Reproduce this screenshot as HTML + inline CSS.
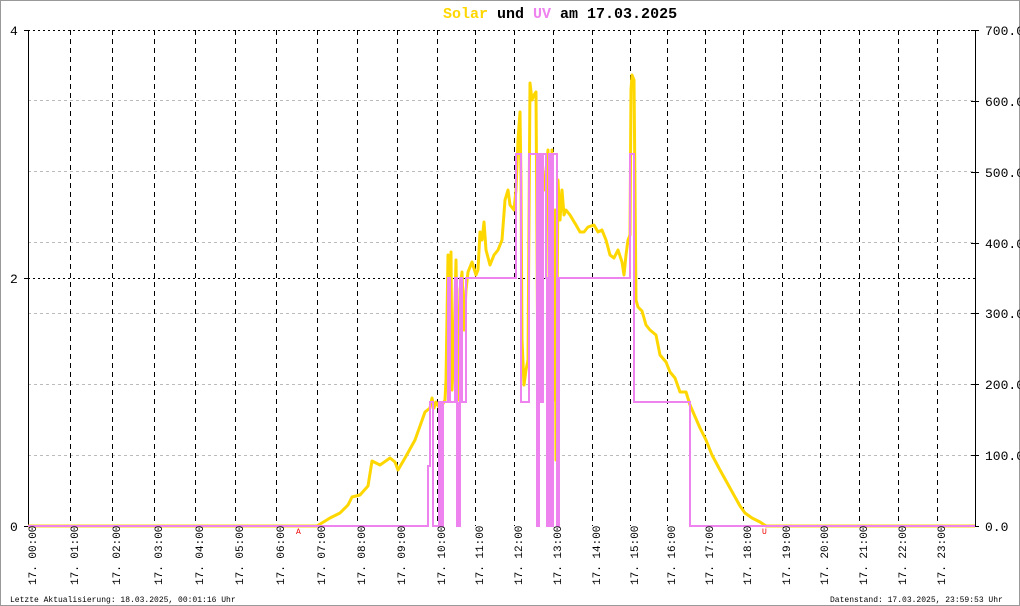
<!DOCTYPE html>
<html><head><meta charset="utf-8"><style>
html,body{margin:0;padding:0;background:#fff;}
body{width:1020px;height:606px;overflow:hidden;}
svg{display:block;}
text{font-family:"Liberation Mono","DejaVu Sans Mono",monospace;}
</style></head><body>
<svg width="1020" height="606" viewBox="0 0 1020 606" xmlns="http://www.w3.org/2000/svg">
<rect x="0.5" y="0.5" width="1019" height="605" fill="#fff" stroke="#999"/>
<text x="443" y="18" font-size="15" font-weight="bold" fill="#000"><tspan fill="#ffd700">Solar</tspan> und <tspan fill="#ee82ee">UV</tspan> am 17.03.2025</text>
<g stroke="#bbb" stroke-dasharray="3,3" stroke-width="1">
<line x1="28" y1="100.5" x2="975" y2="100.5"/>
<line x1="28" y1="171.5" x2="975" y2="171.5"/>
<line x1="28" y1="242.5" x2="975" y2="242.5"/>
<line x1="28" y1="313.5" x2="975" y2="313.5"/>
<line x1="28" y1="384.5" x2="975" y2="384.5"/>
<line x1="28" y1="455.5" x2="975" y2="455.5"/>
</g>
<g stroke="#000" stroke-dasharray="2,3" stroke-width="1">
<line x1="28" y1="30.5" x2="975" y2="30.5"/>
<line x1="28" y1="278.5" x2="975" y2="278.5"/>
</g>
<g stroke="#000" stroke-dasharray="5,4" stroke-width="1">
<line x1="70.5" y1="30" x2="70.5" y2="526"/><line x1="112.5" y1="30" x2="112.5" y2="526"/>
<line x1="154.5" y1="30" x2="154.5" y2="526"/><line x1="195.5" y1="30" x2="195.5" y2="526"/>
<line x1="235.5" y1="30" x2="235.5" y2="526"/><line x1="276.5" y1="30" x2="276.5" y2="526"/>
<line x1="317.5" y1="30" x2="317.5" y2="526"/><line x1="357.5" y1="30" x2="357.5" y2="526"/>
<line x1="397.5" y1="30" x2="397.5" y2="526"/><line x1="437.5" y1="30" x2="437.5" y2="526"/>
<line x1="475.5" y1="30" x2="475.5" y2="526"/><line x1="514.5" y1="30" x2="514.5" y2="526"/>
<line x1="553.5" y1="30" x2="553.5" y2="526"/><line x1="592.5" y1="30" x2="592.5" y2="526"/>
<line x1="630.5" y1="30" x2="630.5" y2="526"/><line x1="667.5" y1="30" x2="667.5" y2="526"/>
<line x1="705.5" y1="30" x2="705.5" y2="526"/><line x1="743.5" y1="30" x2="743.5" y2="526"/>
<line x1="782.5" y1="30" x2="782.5" y2="526"/><line x1="820.5" y1="30" x2="820.5" y2="526"/>
<line x1="859.5" y1="30" x2="859.5" y2="526"/><line x1="898.5" y1="30" x2="898.5" y2="526"/>
<line x1="937.5" y1="30" x2="937.5" y2="526"/>
</g>
<g stroke="#000" stroke-width="1">
<line x1="28.5" y1="30" x2="28.5" y2="527"/>
<line x1="975.5" y1="30" x2="975.5" y2="527"/>
<line x1="24" y1="30.5" x2="28" y2="30.5"/><line x1="24" y1="278.5" x2="28" y2="278.5"/><line x1="24" y1="526.5" x2="28" y2="526.5"/>
<line x1="971" y1="30.5" x2="979" y2="30.5"/><line x1="971" y1="101.5" x2="979" y2="101.5"/><line x1="971" y1="172.5" x2="979" y2="172.5"/>
<line x1="971" y1="243.5" x2="979" y2="243.5"/><line x1="971" y1="313.5" x2="979" y2="313.5"/><line x1="971" y1="384.5" x2="979" y2="384.5"/>
<line x1="971" y1="455.5" x2="979" y2="455.5"/><line x1="971" y1="526.5" x2="979" y2="526.5"/>
</g>
<g font-size="13" fill="#000">
<text x="10" y="35">4</text><text x="10" y="283">2</text><text x="10" y="531">0</text>
<text x="985" y="35">700.0</text><text x="985" y="106">600.0</text><text x="985" y="177">500.0</text>
<text x="985" y="248">400.0</text><text x="985" y="318">300.0</text><text x="985" y="389">200.0</text>
<text x="985" y="460">100.0</text><text x="985" y="531">0.0</text>
</g>
<polyline fill="none" stroke="#ffd700" stroke-width="3" stroke-linejoin="round" points="28,526 317,526 330,518 340,513 348,505 352,497 360,495 368,486 372,461 380,465 390,458 395,462 398,470 405,458 415,440 425,412 430,408 432,398 434,408 436,402 440,409 445,400 446,380 448,255 449,370 451,252 452,390 454,345 456,260 458,400 460,290 462,272 464,330 466,290 468,272 472,262 476,275 478,270 480,232 482,240 484,222 486,250 490,265 494,255 498,250 502,240 505,200 508,190 510,205 514,210 516,190 518,140 520,112 521,180 522,340 524,385 526,370 528,360 530,83 532,100 534,95 536,92 538,400 539,160 540,180 542,170 544,190 546,170 548,150 550,400 552,150 553,400 555,210 556,460 558,180 560,220 562,190 564,215 566,210 570,215 576,225 580,232 584,232 588,227 594,225 598,232 602,230 606,240 610,255 614,258 618,250 622,262 624,275 626,255 628,240 630,235 631,90 632,75 634,80 636,300 638,307 642,311 646,325 650,330 656,335 660,355 666,362 670,372 675,378 680,392 686,392 690,405 700,428 706,440 712,455 720,470 730,488 740,506 745,513 752,518 760,522 766,526 975,526"/>
<polyline fill="none" stroke="#ee82ee" stroke-width="2" points="28,526 428,526 428,466 430,466 430,402 433,402 433,526 439,526 439,402 441,402 441,526 443,526 443,402 448,402 448,278 450,278 450,402 455,402 455,278 457,278 457,526 460,526 460,278 462,278 462,402 466,402 466,278 516,278 516,154 521,154 521,402 529,402 529,154 537,154 537,526 539,526 539,154 541,154 541,402 543,402 543,154 546,154 546,278 547,278 547,526 549,526 549,154 551,154 551,526 553,526 553,154 557,154 557,526 559,526 559,278 630,278 630,154 634,154 634,402 690,402 690,526 975,526"/>
<rect x="439" y="402" width="4" height="124" fill="#ee82ee"/>
<rect x="456" y="402" width="5" height="124" fill="#ee82ee"/>
<rect x="546" y="278" width="7" height="248" fill="#ee82ee"/>
<text x="296" y="534" font-size="8" fill="#e00">A</text>
<text x="762" y="534" font-size="8" fill="#e00">U</text>
<g font-size="11" fill="#000">
<text transform="translate(36,585) rotate(-90)">17. 00:00</text><text transform="translate(78,585) rotate(-90)">17. 01:00</text>
<text transform="translate(120,585) rotate(-90)">17. 02:00</text><text transform="translate(162,585) rotate(-90)">17. 03:00</text>
<text transform="translate(203,585) rotate(-90)">17. 04:00</text><text transform="translate(243,585) rotate(-90)">17. 05:00</text>
<text transform="translate(284,585) rotate(-90)">17. 06:00</text><text transform="translate(325,585) rotate(-90)">17. 07:00</text>
<text transform="translate(365,585) rotate(-90)">17. 08:00</text><text transform="translate(405,585) rotate(-90)">17. 09:00</text>
<text transform="translate(445,585) rotate(-90)">17. 10:00</text><text transform="translate(483,585) rotate(-90)">17. 11:00</text>
<text transform="translate(522,585) rotate(-90)">17. 12:00</text><text transform="translate(561,585) rotate(-90)">17. 13:00</text>
<text transform="translate(600,585) rotate(-90)">17. 14:00</text><text transform="translate(638,585) rotate(-90)">17. 15:00</text>
<text transform="translate(675,585) rotate(-90)">17. 16:00</text><text transform="translate(713,585) rotate(-90)">17. 17:00</text>
<text transform="translate(751,585) rotate(-90)">17. 18:00</text><text transform="translate(790,585) rotate(-90)">17. 19:00</text>
<text transform="translate(828,585) rotate(-90)">17. 20:00</text><text transform="translate(867,585) rotate(-90)">17. 21:00</text>
<text transform="translate(906,585) rotate(-90)">17. 22:00</text><text transform="translate(945,585) rotate(-90)">17. 23:00</text>
</g>
<text x="10" y="602" font-size="8" fill="#000">Letzte Aktualisierung: 18.03.2025, 00:01:16 Uhr</text>
<text x="830" y="602" font-size="8" fill="#000">Datenstand: 17.03.2025, 23:59:53 Uhr</text>
</svg>
</body></html>
